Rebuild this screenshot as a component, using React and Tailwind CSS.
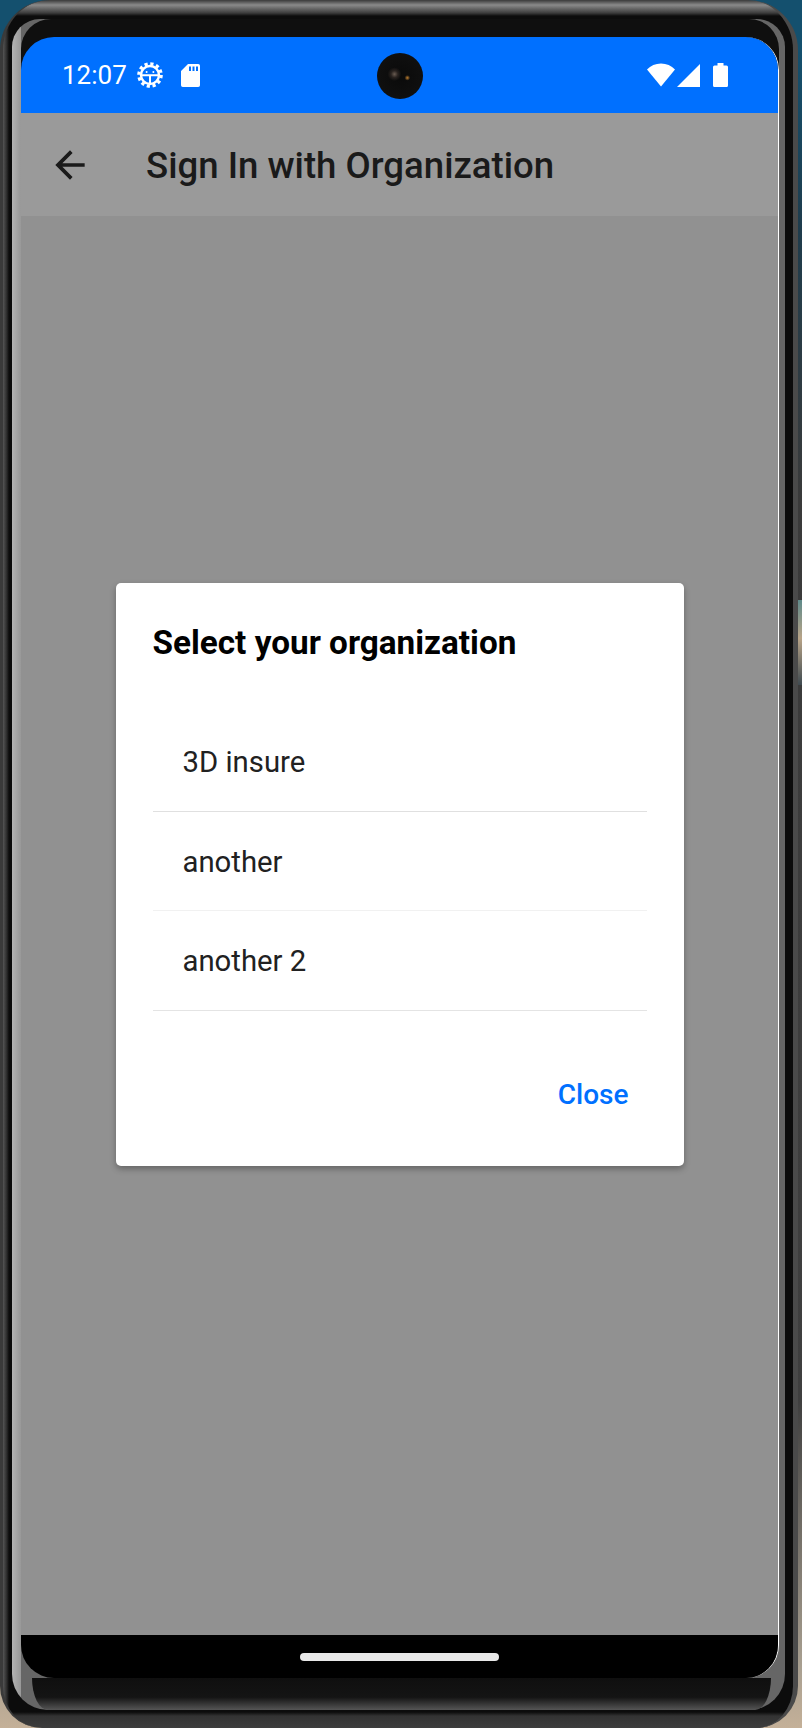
const ORGS = [
  { name: "3D insure", row: "h-[100px] border-[#e0e0e0]" },
  { name: "another", row: "h-[99px] border-[#f1f1f1]" },
  { name: "another 2", row: "h-[100px] border-[#e4e4e4]" },
];

function GearIcon() {
  return (
    <svg width="26" height="26" viewBox="0 0 26 26" fill="none" stroke="white">
      {/* teeth */}
      <circle cx="13" cy="13" r="11.2" strokeWidth="3.2" strokeDasharray="3.2 2.66" />
      <circle cx="13" cy="13" r="9" strokeWidth="2.4" />
      {/* android head and legs */}
      <path d="M5 13.2h16M13 13.2V21" strokeWidth="2" />
      <circle cx="9.6" cy="10" r="1" fill="white" stroke="none" />
      <circle cx="16.4" cy="10" r="1" fill="white" stroke="none" />
    </svg>
  );
}

function SdIcon() {
  return (
    <svg width="19" height="23" viewBox="0 0 19 23" fill="white">
      <path
        fillRule="evenodd"
        d="M7 0h10.2A1.8 1.8 0 0 1 19 1.8v19.4a1.8 1.8 0 0 1-1.8 1.8H1.8A1.8 1.8 0 0 1 0 21.2V7zM8 2.5v4.5h2V2.5zM11.5 2.5v4.5h2V2.5zM15 2.5v4.5h2V2.5z"
      />
    </svg>
  );
}

function BackArrow() {
  return (
    <svg width="44" height="44" viewBox="0 0 24 24" fill="#1a1a1a">
      <path d="M20 11H7.830l5.590-5.590L12 4l-8 8 8 8 1.410-1.410L7.830 13H20v-2z" />
    </svg>
  );
}

function StatusIcons() {
  return (
    <div className="flex items-center">
      <svg width="28" height="24" viewBox="0 0 28 24" fill="white">
        <path d="M0 6.500C3.600 2.600 8.500.5 14 .5s10.400 2.100 14 6L14 23.500z" />
      </svg>
      <svg width="23" height="23" viewBox="0 0 23 23" fill="white" className="ml-[2px]">
        <path d="M23 0v23H0z" />
      </svg>
      <svg width="15" height="24" viewBox="0 0 15 24" fill="white" className="ml-[13px]">
        <path d="M4.500 0h6v2.500h3A1.500 1.500 0 0 1 15 4v18.500A1.500 1.500 0 0 1 13.500 24h-12A1.500 1.500 0 0 1 0 22.500V4a1.500 1.500 0 0 1 1.500-1.500h3z" />
      </svg>
    </div>
  );
}

function StatusBar() {
  return (
    <div className="relative flex h-[76px] shrink-0 items-center justify-between bg-[#0070ff] pl-[41px] pr-[50px] text-white">
      <div className="flex items-center">
        <span className="text-[26px] leading-none">12:07</span>
        <span className="ml-[10px] flex"><GearIcon /></span>
        <span className="ml-[18px] flex"><SdIcon /></span>
      </div>
      {/* punch hole camera */}
      <div className="absolute left-[356px] top-[16px] h-[46px] w-[46px] rounded-full bg-[radial-gradient(circle_at_38%_46%,#6a5c52_0,#2a2320_9%,transparent_18%),radial-gradient(circle_at_66%_54%,#c08030_0,transparent_7%),radial-gradient(circle,#0a0a0a_0,#101010_75%,#161616_100%)]" />
      <StatusIcons />
    </div>
  );
}

function OrgDialog() {
  return (
    <div className="mx-auto flex h-[583px] w-[568px] flex-col rounded-[5px] bg-white px-[37px] pt-[37px] shadow-[0_3px_6px_rgba(0,0,0,0.3)]">
      <h2 className="h-[46px] text-[33.300px] font-bold leading-[46px] text-black">Select your organization</h2>
      <ul className="mt-[46px]">
        {ORGS.map((org) => (
          <li
            key={org.name}
            className={`flex items-center border-b pl-[30px] pt-[3px] text-[29.300px] text-[#212121] ${org.row}`}
          >
            {org.name}
          </li>
        ))}
      </ul>
      <div className="mt-[53px] flex justify-end pr-[18px]">
        <button className="text-[28px] font-medium leading-[62px] text-[#0070ff]">Close</button>
      </div>
    </div>
  );
}

export default function App() {
  return (
    <div className="relative h-[1728px] w-[802px] overflow-hidden bg-[linear-gradient(to_bottom,#14506e_0,#14506e_50px,#1f3c4c_230px,#3a3a3a_500px,#3f3f3f_1400px,#a9a091_1668px,#c4b098_1728px)] [font-family:Roboto,sans-serif]">
      {/* phone body */}
      <div className="flex h-full w-[798px] flex-col rounded-t-[50px] rounded-b-[42px] border-l-[3px] border-r-[5px] border-l-[#3a3a3a] border-r-[#4a4a4a] bg-[linear-gradient(to_right,#555_0,#2a2a2a_4px,transparent_6px),linear-gradient(to_bottom,#3a3a3a_0,#8a8a8a_5px,#3c3c3c_13px,#0c0c0c_16px,#0c0c0c_1712px,#333_1716px,#3d3d3d_1728px)] pb-[18px] pl-[9px] pr-[8px] pt-[19px]">
        {/* light inner edge of the glass */}
        <div className="flex flex-1 flex-col rounded-t-[28px] rounded-b-[36px] bg-[linear-gradient(to_right,#b4b4b4_0,#989898_9px,#666_9px,#666_100%)]">
          <div className="ml-[9px] mr-[6px] rounded-t-[30px] bg-[linear-gradient(to_bottom,#0f0f0f_100px,transparent_100px)] pt-[18px]">
            <div className="flex h-[1641px] flex-col overflow-hidden rounded-[33px] border-r border-r-white">
              <StatusBar />
              <div className="flex h-[103px] shrink-0 items-center bg-[#9a9a9a] pl-[27px] text-[#1a1a1a]">
                <BackArrow />
                <h1 className="ml-[54px] pt-[4px] text-[36.600px] font-medium leading-none">Sign In with Organization</h1>
              </div>
              <div className="flex-1 bg-[#919191] pt-[367px]">
                <OrgDialog />
              </div>
              <div className="flex h-[43px] shrink-0 justify-center bg-black pt-[18px]">
                <div className="h-[8px] w-[199px] rounded-full bg-[#e8e8e8]" />
              </div>
            </div>
          </div>
          {/* chin below the screen */}
          <div className="ml-[20px] mr-[14px] flex-1 rounded-b-[16px_32px] bg-[linear-gradient(to_bottom,#0f0f0f_0,#141414_60%,#555_100%)]" />
        </div>
      </div>
      {/* wallpaper showing through the gap by the side key */}
      <div className="absolute left-[798px] top-[600px] h-[85px] w-[4px] bg-[linear-gradient(to_bottom,#5f8a8a_0,#b8a488_45%,#3f4a50_100%)]" />
    </div>
  );
}
